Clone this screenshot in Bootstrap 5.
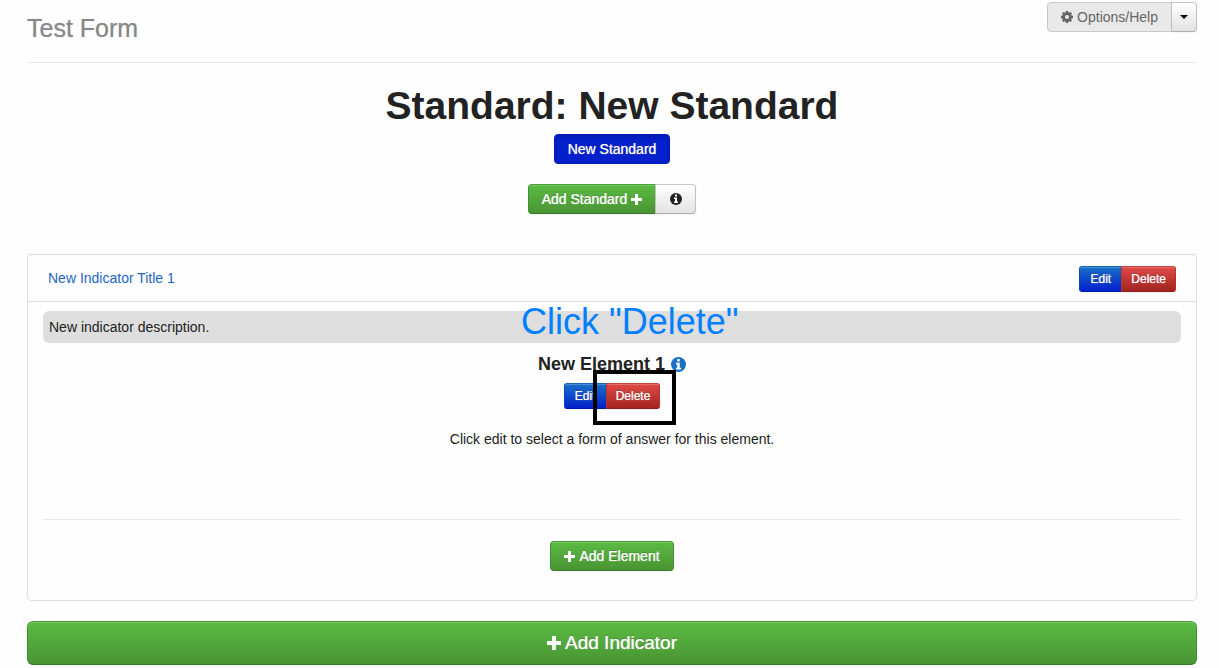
<!DOCTYPE html>
<html lang="en">
<head>
<meta charset="utf-8">
<meta name="viewport" content="width=device-width, initial-scale=1">
<title>Test Form</title>
<link href="https://cdn.jsdelivr.net/npm/bootstrap@5.3.0/dist/css/bootstrap.min.css" rel="stylesheet">
<style>
  body {
    font-family: "Liberation Sans", Arial, sans-serif;
    font-size: 14px;
    line-height: 20px;
    color: #222;
    background: #fefefe;
  }
  .page { padding: 0 22px 0 27px; }
  .page-top { height: 63px; padding-top: 2px; border-bottom: 1px solid #e8e8e8; }
  .form-name { font-size: 25px; line-height: 52px; font-weight: 400; color: #888; text-shadow: 0 0 1px rgba(136,136,136,.6); }
  .standard-block { padding-top: 23px; }
  .standard-title { font-size: 39px; line-height: 40px; font-weight: 700; }
  .element-title { font-size: 18px; line-height: 20px; font-weight: 700; }

  .btn {
    --bs-btn-font-size: 14px;
    --bs-btn-line-height: 20px;
    --bs-btn-padding-y: 4px;
    --bs-btn-padding-x: 13px;
    --bs-btn-border-radius: 4px;
    box-shadow: inset 0 1px 0 rgba(255,255,255,.2), 0 1px 2px rgba(0,0,0,.05);
  }
  .btn-mini {
    --bs-btn-font-size: 12px;
    --bs-btn-line-height: 20px;
    --bs-btn-padding-y: 2px;
    --bs-btn-padding-x: 9px;
    --bs-btn-border-radius: 3px;
    min-width: 43px;
  }
  .btn-wide { --bs-btn-font-size: 19px; --bs-btn-padding-y: 11px; --bs-btn-border-radius: 6px; }
  .btn-green, .btn-blue, .btn-red, .btn-solid {
    --bs-btn-color: #fff;
    --bs-btn-hover-color: #fff;
    text-shadow: 0 0 1px rgba(255,255,255,.8), 0 -1px 0 rgba(0,0,0,.25);
  }
  .btn-green { background: linear-gradient(#5bbb43, #499433); border-color: #46a035 #419030 #387a28; }
  .btn-blue { background: linear-gradient(#1a70c8, #0320cc); border-color: #1664b8 #0a48c0 #0219a8; }
  .btn-red { background: linear-gradient(#e04a46, #a32420); border-color: #c8403c #b53430 #8c1d1a; }
  .btn-solid {
    background: #0320cc;
    border-color: #021cb4;
    box-shadow: inset 0 2px 4px rgba(0,0,0,.15), 0 1px 2px rgba(0,0,0,.05);
  }
  .btn-gray { background: linear-gradient(#fff, #e2e2e2); border-color: #c6c6c6 #c0c0c0 #aeaeae; }
  .btn-flat { background: #e9e9e9; border-color: #c8c8c8; color: #666; box-shadow: none; }
  .btn-info-mark { width: 41px; }
  .btn-caret { --bs-btn-padding-x: 7px; width: 26px; }
  .caret { display: block; border: 4px solid transparent; border-top-color: #000; border-bottom: 0; }

  .panel { border: 1px solid #ddd; border-radius: 4px; }
  .panel-top { padding: 11px 20px 9px; border-bottom: 1px solid #ddd; }
  .panel-main { padding: 9px 15px 29px; }
  .panel-link { color: #1d65c4; line-height: 24px; }
  .desc { background: #dedede; border-radius: 6px; padding: 6px; }
  .rule { border-top: 1px solid #e8e8e8; }
  .answer { min-height: 90px; }
  .callout-text { top: -9px; left: 42%; font-size: 36px; line-height: 40px; color: #0080ff; }
  .callout-box { top: -13px; left: 29px; width: 83px; height: 55px; border: 4px solid #000; pointer-events: none; z-index: 5; }
  .blue-mark { color: #1a70c8; }
  .add-standard { margin: 20px 0 40px; }
  .element-title { margin-top: 11px; gap: 6px; }
  .element-actions { margin: 9px 0 20px; }
  .add-element { margin-top: 21px; }
  .add-indicator { margin-top: 20px; }
  svg { display: block; flex: none; }
</style>
</head>
<body>
<main class="page">
  <header class="page-top d-flex justify-content-between align-items-start">
    <h2 class="form-name m-0">Test Form</h2>
    <div class="btn-group">
      <button type="button" class="btn btn-flat d-flex align-items-center gap-1">
        <svg width="12" height="12" viewBox="0 0 12 12" fill="currentColor" aria-hidden="true"><path fill-rule="evenodd" d="M4.800 0h2.400l.3 1.500.7.3L9.500 1 11 2.500l-.8 1.300.3.7L12 4.800v2.400l-1.500.3-.3.7.8 1.300L9.500 11l-1.300-.8-.7.3L7.200 12H4.800l-.3-1.500-.7-.3-1.300.8L1 9.500l.8-1.300-.3-.7L0 7.200V4.800l1.500-.3.3-.7L1 2.500 2.500 1l1.300.8.7-.3zM6 4a2 2 0 1 0 0 4 2 2 0 0 0 0-4z"/></svg>
        Options/Help
      </button>
      <button type="button" class="btn btn-gray btn-caret d-flex align-items-center justify-content-center" aria-label="More options"><span class="caret"></span></button>
    </div>
  </header>

  <section class="standard-block d-flex flex-column align-items-center">
    <h1 class="standard-title m-0 text-center">Standard: New Standard</h1>
    <button type="button" class="btn btn-solid mt-2">New Standard</button>
    <div class="btn-group add-standard">
      <button type="button" class="btn btn-green d-flex align-items-center gap-1">Add Standard
        <svg width="11" height="11" viewBox="0 0 11 11" fill="currentColor" aria-hidden="true"><path d="M4 0h3v4h4v3H7v4H4V7H0V4h4z"/></svg>
      </button>
      <button type="button" class="btn btn-gray btn-info-mark d-flex align-items-center justify-content-center" aria-label="About standards">
        <svg width="12" height="12" viewBox="0 0 12 12" aria-hidden="true"><circle cx="6" cy="6" r="6" fill="#222"/><path fill="#fff" d="M5 1.500h2v2H5zM4 4.500h3v4h1V10H4V8.500h1V6H4z"/></svg>
      </button>
    </div>
  </section>

  <section class="panel">
    <div class="panel-top d-flex justify-content-between align-items-start">
      <a href="#" class="panel-link text-decoration-none">New Indicator Title 1</a>
      <div class="btn-group">
        <button type="button" class="btn btn-mini btn-blue">Edit</button>
        <button type="button" class="btn btn-mini btn-red">Delete</button>
      </div>
    </div>
    <div class="panel-main d-flex flex-column">
      <div class="desc position-relative">New indicator description.
        <span class="callout-text position-absolute text-nowrap">Click "Delete"</span>
      </div>
      <div class="element-title d-flex justify-content-center align-items-center">
        <span>New Element 1</span>
        <svg class="blue-mark" width="15" height="15" viewBox="0 0 12 12" aria-hidden="true"><circle cx="6" cy="6" r="6" fill="currentColor"/><path fill="#fff" d="M5 1.500h2v2H5zM4 4.500h3v4h1V10H4V8.500h1V6H4z"/></svg>
      </div>
      <div class="element-actions align-self-center position-relative d-flex">
        <div class="btn-group">
          <button type="button" class="btn btn-mini btn-blue">Edit</button>
          <button type="button" class="btn btn-mini btn-red">Delete</button>
        </div>
        <span class="callout-box position-absolute"></span>
      </div>
      <p class="answer text-center mb-0">Click edit to select a form of answer for this element.</p>
      <div class="rule"></div>
      <button type="button" class="btn btn-green add-element align-self-center d-flex align-items-center gap-1">
        <svg width="11" height="11" viewBox="0 0 11 11" fill="currentColor" aria-hidden="true"><path d="M4 0h3v4h4v3H7v4H4V7H0V4h4z"/></svg>
        Add Element
      </button>
    </div>
  </section>

  <button type="button" class="btn btn-green btn-wide add-indicator w-100 d-flex align-items-center justify-content-center gap-1">
    <svg width="14" height="14" viewBox="0 0 11 11" fill="currentColor" aria-hidden="true"><path d="M4 0h3v4h4v3H7v4H4V7H0V4h4z"/></svg>
    Add Indicator
  </button>
</main>
<script src="https://cdn.jsdelivr.net/npm/bootstrap@5.3.0/dist/js/bootstrap.bundle.min.js"></script>
</body>
</html>
